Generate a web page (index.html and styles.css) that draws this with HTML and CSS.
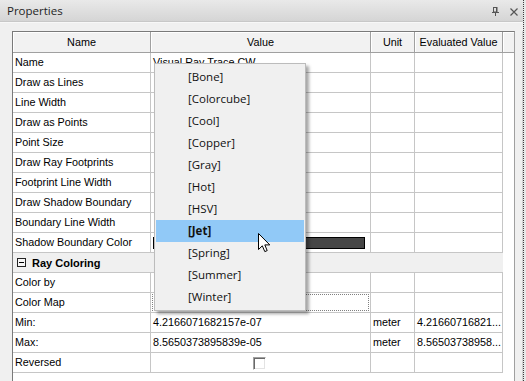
FILE: index.html
```html
<!DOCTYPE html>
<html>
<head>
<meta charset="utf-8">
<link rel="stylesheet" href="styles.css">
</head>
<body>
<div class="dock">
  <div class="panel">
    <div class="titlebar">
      <span class="title">Properties</span>
      <span class="tools">
        <svg class="pin" width="7" height="9" viewBox="0 0 7 9"><rect x="1.5" y="0.5" width="3.5" height="4.5" fill="none" stroke="#555"/><line x1="4.5" y1="0.5" x2="4.5" y2="5" stroke="#555"/><line x1="0" y1="5.5" x2="7" y2="5.5" stroke="#555"/><line x1="3.5" y1="6" x2="3.5" y2="9" stroke="#555"/></svg>
        <svg class="close" width="8" height="8" viewBox="0 0 8 8"><path d="M0.5 0.5 L7.5 7.5 M7.5 0.5 L0.5 7.5" stroke="#555" stroke-width="1.2"/></svg>
      </span>
    </div>
    <div class="panel-body">
      <div class="grid">
        <div class="row head">
          <div class="hc">Name</div><div class="hc">Value</div><div class="hc">Unit</div><div class="hc">Evaluated Value</div><div class="hc last"></div>
        </div>
        <div class="row"><div class="c">Name</div><div class="c">Visual Ray Trace CW</div><div class="c"></div><div class="c"></div><div class="x"></div></div>
        <div class="row"><div class="c">Draw as Lines</div><div class="c"></div><div class="c"></div><div class="c"></div><div class="x"></div></div>
        <div class="row"><div class="c">Line Width</div><div class="c"></div><div class="c"></div><div class="c"></div><div class="x"></div></div>
        <div class="row"><div class="c">Draw as Points</div><div class="c"></div><div class="c"></div><div class="c"></div><div class="x"></div></div>
        <div class="row"><div class="c">Point Size</div><div class="c"></div><div class="c"></div><div class="c"></div><div class="x"></div></div>
        <div class="row"><div class="c">Draw Ray Footprints</div><div class="c"></div><div class="c"></div><div class="c"></div><div class="x"></div></div>
        <div class="row"><div class="c">Footprint Line Width</div><div class="c"></div><div class="c"></div><div class="c"></div><div class="x"></div></div>
        <div class="row"><div class="c">Draw Shadow Boundary</div><div class="c"></div><div class="c"></div><div class="c"></div><div class="x"></div></div>
        <div class="row"><div class="c">Boundary Line Width</div><div class="c"></div><div class="c"></div><div class="c"></div><div class="x"></div></div>
        <div class="row"><div class="c">Shadow Boundary Color</div><div class="c sw"><div class="swatch"></div></div><div class="c"></div><div class="c"></div><div class="x"></div></div>
        <div class="row"><div class="cat"><span class="minus"></span><span>Ray Coloring</span></div><div class="x"></div></div>
        <div class="row"><div class="c">Color by</div><div class="c"></div><div class="c"></div><div class="c"></div><div class="x"></div></div>
        <div class="row"><div class="c">Color Map</div><div class="c fc"><div class="focus"></div></div><div class="c"></div><div class="c"></div><div class="x"></div></div>
        <div class="row"><div class="c">Min:</div><div class="c">4.2166071682157e-07</div><div class="c">meter</div><div class="c">4.21660716821...</div><div class="x"></div></div>
        <div class="row"><div class="c">Max:</div><div class="c">8.5650373895839e-05</div><div class="c">meter</div><div class="c">8.56503738958...</div><div class="x"></div></div>
        <div class="row"><div class="c">Reversed</div><div class="c cb"><span class="check"></span></div><div class="c"></div><div class="c"></div><div class="x"></div></div>
      </div>
      <div class="gutter"></div>
    </div>
  </div>
  <div class="edge"></div>
</div>

<div class="dropdown">
  <div class="item">[Bone]</div>
  <div class="item">[Colorcube]</div>
  <div class="item">[Cool]</div>
  <div class="item">[Copper]</div>
  <div class="item">[Gray]</div>
  <div class="item">[Hot]</div>
  <div class="item">[HSV]</div>
  <div class="item sel">[Jet]</div>
  <div class="item">[Spring]</div>
  <div class="item">[Summer]</div>
  <div class="item">[Winter]</div>
</div>

<svg class="cursor" width="13" height="20" viewBox="0 0 13 20"><path d="M0.5 0.5 L0.5 16.5 L4.3 12.8 L6.8 18.6 L9.2 17.6 L6.8 11.9 L11.8 11.9 Z" fill="#fff" stroke="#000" stroke-width="1" stroke-linejoin="miter"/></svg>
</body>
</html>
```

FILE: styles.css
```css
* { box-sizing: border-box; }
html, body { margin: 0; padding: 0; }
body {
  width: 526px;
  height: 381px;
  overflow: hidden;
  position: relative;
  background: #f0f0f0;
  font-family: "Liberation Sans", Arial, sans-serif;
  font-size: 10.8px;
  color: #000;
}
.dock { display: flex; height: 381px; }
.panel { width: 523px; display: flex; flex-direction: column; }
.titlebar {
  height: 22px;
  flex: none;
  display: flex;
  align-items: center;
  padding: 0 5px 0 7px;
  background: linear-gradient(#e9e9e9, #d5d5d5);
  border-bottom: 1px solid #c8c8c8;
  font-family: "Open Sans", sans-serif;
  font-size: 11.5px;
  color: #1e1e1e;
}
.tools { margin-left: auto; display: flex; gap: 11px; align-items: center; padding-top: 2px; }
.pin, .close { display: block; }
.panel-body {
  flex: 1;
  min-height: 0;
  display: flex;
  padding: 8px 0 0 12px;
  border-top: 1px solid #f8f8f8;
}
.grid {
  width: 503px;
  border: 1px solid #7a7a7a;
  border-bottom: none;
  border-right-color: #a0a0a0;
  background: #fff;
}
.gutter { width: 8px; border-right: 1px solid #d0d0d0; }
.row {
  display: grid;
  grid-template-columns: 138px 220px 44px 88px 11px;
  height: 20px;
}
.row.head { height: 21px; }
.hc {
  background: #f2f2f2;
  border-right: 1px solid #a0a0a0;
  border-bottom: 1px solid #a0a0a0;
  box-shadow: inset 1px 1px #fff;
  text-align: center;
  line-height: 20px;
  white-space: nowrap;
}
.hc.last { border-right: none; }
.c {
  border-right: 1px solid #c6c6c6;
  border-bottom: 1px solid #c6c6c6;
  padding-left: 2px;
  line-height: 19px;
  white-space: nowrap;
  overflow: hidden;
}
.x { background: #fff; }
.c.sw { padding: 4px 5px 3px 2px; }
.swatch { height: 12px; background: #464646; border: 1px solid #000; }
.c.fc { padding: 1px; }
.focus { height: 100%; border: 1px dotted #808080; }
.c.cb { display: flex; align-items: center; justify-content: center; padding: 1px 2px 0 0; }
.check {
  width: 13px;
  height: 13px;
  background: #fff;
  border: 1px solid;
  border-color: #a0a0a0 #fff #fff #a0a0a0;
  box-shadow: inset 1px 1px #696969, inset -1px -1px #e3e3e3;
}
.cat {
  grid-column: 1 / 5;
  display: flex;
  align-items: center;
  gap: 6px;
  padding-left: 4px;
  background: #f0f0f0;
  border-bottom: 1px solid #c6c6c6;
  font-size: 11px;
  font-weight: bold;
}
.minus {
  width: 9px;
  height: 9px;
  border: 1px solid #222;
  background: #f6f6f6;
  position: relative;
  flex: none;
}
.minus::after {
  content: "";
  position: absolute;
  left: 1px;
  right: 1px;
  top: 3px;
  height: 1px;
  background: #000;
}
.edge {
  width: 3px;
  border-left: 1px dotted #3c3c3c;
  background: #e8e8e8;
}
.dropdown {
  position: absolute;
  left: 154px;
  top: 63px;
  width: 152px;
  height: 248px;
  padding: 2px 1px;
  background: #f0f0f0;
  border: 1px solid #bcbcbc;
  box-shadow: 3px 3px 3px rgba(0, 0, 0, 0.35);
  font-family: "Open Sans", sans-serif;
  font-size: 11.5px;
  color: #111;
}
.item { height: 22px; line-height: 22px; padding-left: 32px; white-space: nowrap; }
.item.sel { background: #91c9f7; font-weight: bold; }
.cursor { position: absolute; left: 258px; top: 233px; }
```
